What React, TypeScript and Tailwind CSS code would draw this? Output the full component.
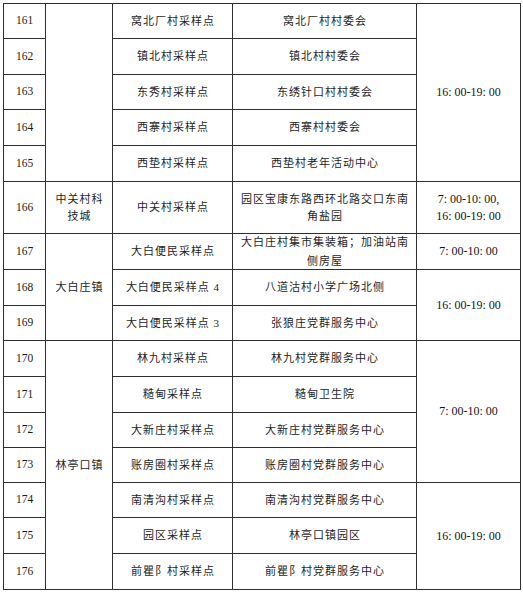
import React from "react";

const cjk = "font-['Liberation_Serif','Noto_Sans_CJK_SC',serif] text-[11px] tracking-[1px] text-[#1e1e1e] leading-[17px]";
const num = "font-['Liberation_Serif',serif] text-[11.5px] text-[#1a1a1a]";
const tm = "font-['Liberation_Serif',serif] text-[12px] text-[#151515] leading-[17px]";
const cell = "bg-white flex items-center justify-center text-center";

function N({ v }: { v: string }) {
  return <div className={`${cell} ${num}`}>{v}</div>;
}
function C({ children, cls = "" }: { children?: React.ReactNode; cls?: string }) {
  return <div className={`${cell} ${cjk} pl-[1px] ${cls}`}>{children}</div>;
}
function T({ children, cls = "" }: { children?: React.ReactNode; cls?: string }) {
  return <div className={`${cell} ${tm} ${cls}`}>{children}</div>;
}

export default function App() {
  return (
    <div className="bg-white w-[523px] h-[592px] pt-[3px] pl-[3px]">
      <div className="grid w-fit bg-[#2e2e2e] p-px gap-px grid-cols-[41px_66px_119px_183px_103px] grid-rows-[34px_35px_34px_35px_35px_51px_35px_35px_34px_35px_35px_34px_34px_34px_35px_35px]">
        {/* 161 */}
        <N v="161" />
        <C cls="row-span-5" />
        <C>窝北厂村采样点</C>
        <C>窝北厂村村委会</C>
        <T cls="row-span-5">16: 00-19: 00</T>
        {/* 162 */}
        <N v="162" />
        <C>镇北村采样点</C>
        <C>镇北村村委会</C>
        {/* 163 */}
        <N v="163" />
        <C>东秀村采样点</C>
        <C>东绣针口村村委会</C>
        {/* 164 */}
        <N v="164" />
        <C>西寨村采样点</C>
        <C>西寨村村委会</C>
        {/* 165 */}
        <N v="165" />
        <C>西垫村采样点</C>
        <C>西垫村老年活动中心</C>
        {/* 166 */}
        <N v="166" />
        <C>
          中关村科
          <br />
          技城
        </C>
        <C>中关村采样点</C>
        <C>
          园区宝康东路西环北路交口东南
          <br />
          角盐园
        </C>
        <T>
          7: 00-10: 00,
          <br />
          16: 00-19: 00
        </T>
        {/* 167 */}
        <N v="167" />
        <C cls="row-span-3">大白庄镇</C>
        <C>大白便民采样点</C>
        <C cls="leading-[19px]">
          大白庄村集市集装箱；加油站南
          <br />
          侧房屋
        </C>
        <T>7: 00-10: 00</T>
        {/* 168 */}
        <N v="168" />
        <C>大白便民采样点 4</C>
        <C>八道沽村小学广场北侧</C>
        <T cls="row-span-2">16: 00-19: 00</T>
        {/* 169 */}
        <N v="169" />
        <C>大白便民采样点 3</C>
        <C>张狼庄党群服务中心</C>
        {/* 170 */}
        <N v="170" />
        <C cls="row-span-7">林亭口镇</C>
        <C>林九村采样点</C>
        <C>林九村党群服务中心</C>
        <T cls="row-span-4">7: 00-10: 00</T>
        {/* 171 */}
        <N v="171" />
        <C>糙甸采样点</C>
        <C>糙甸卫生院</C>
        {/* 172 */}
        <N v="172" />
        <C>大新庄村采样点</C>
        <C>大新庄村党群服务中心</C>
        {/* 173 */}
        <N v="173" />
        <C>账房圈村采样点</C>
        <C>账房圈村党群服务中心</C>
        {/* 174 */}
        <N v="174" />
        <C>南清沟村采样点</C>
        <C>南清沟村党群服务中心</C>
        <T cls="row-span-3">16: 00-19: 00</T>
        {/* 175 */}
        <N v="175" />
        <C>园区采样点</C>
        <C>林亭口镇园区</C>
        {/* 176 */}
        <N v="176" />
        <C>前瞿阝村采样点</C>
        <C>前瞿阝村党群服务中心</C>
      </div>
    </div>
  );
}
